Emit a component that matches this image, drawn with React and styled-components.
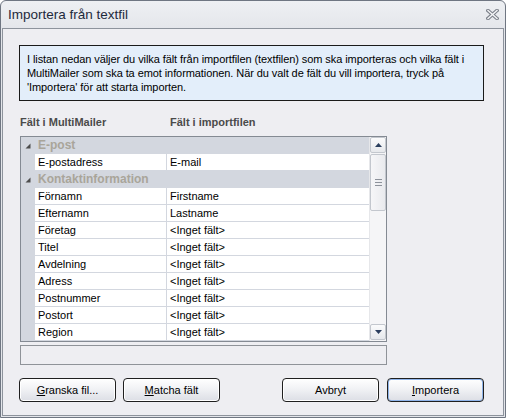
import React from 'react';
import styled, { createGlobalStyle } from 'styled-components';

const GlobalStyle = createGlobalStyle`
  html, body {
    margin: 0;
    padding: 0;
    background: #ffffff;
  }
  * {
    box-sizing: border-box;
  }
`;

const Window = styled.div`
  width: 506px;
  height: 418px;
  display: flex;
  flex-direction: column;
  border: 1px solid #6f7682;
  border-radius: 6px 6px 0 0;
  background: linear-gradient(#eef0f3, #e3e5ea 30px, #e3e5ea);
  font-family: Tahoma, "DejaVu Sans", "Liberation Sans", sans-serif;
  overflow: hidden;
`;

const TitleBar = styled.div`
  height: 27px;
  display: flex;
  align-items: center;
  justify-content: space-between;
  padding: 0 6px 0 7px;
  color: #1d2a3c;
  font-family: "Liberation Sans", Arial, sans-serif;
  font-size: 13.5px;
`;

const Client = styled.div`
  flex: 1;
  margin: 0 1px 1px;
  border: 1px solid #8d939c;
  background: #eeeef2;
  padding: 16px 16px 0 16px;
  display: flex;
  flex-direction: column;
  font-family: "Liberation Sans", Arial, sans-serif;
  font-size: 11px;
  color: #000;
`;

const InfoBox = styled.div`
  width: 465px;
  height: 56px;
  border: 1px solid #1a1a1a;
  background: #e3eefa;
  padding: 6px 7px;
  line-height: 14px;
  white-space: nowrap;
  letter-spacing: -0.08px;
`;

const HeaderRow = styled.div`
  display: flex;
  margin: 14px 0 7px 1px;
  height: 14px;
  line-height: 14px;
  font-weight: bold;
  color: #4b4b4b;
`;

const HeaderCell = styled.div`
  width: ${p => p.w}px;
`;

const Grid = styled.div`
  width: 367px;
  height: 206px;
  margin-left: 1px;
  border: 1px solid #848a93;
  display: flex;
  background: #f3f3f5;
`;

const Rows = styled.div`
  flex: 1;
  display: flex;
  flex-direction: column;
  background: #d3d7df;
`;

const Row = styled.div`
  height: 17px;
  display: flex;
  align-items: stretch;
  line-height: 16px;
`;

const Gutter = styled.div`
  width: 14px;
  display: flex;
  align-items: center;
  justify-content: center;
  padding-top: 1px;
`;

const GroupLabel = styled.div`
  flex: 1;
  padding-left: 3px;
  font-weight: bold;
  font-size: 12px;
  color: #a9a59a;
  line-height: 17px;
`;

const Cell = styled.div`
  width: ${p => p.w ? `${p.w}px` : 'auto'};
  flex: ${p => p.w ? 'none' : 1};
  background: #ffffff;
  border-bottom: 1px solid #d3d7df;
  border-right: ${p => p.divider ? '1px solid #d3d7df' : 'none'};
  padding-left: 3px;
  white-space: nowrap;
  overflow: hidden;
`;

const ScrollBar = styled.div`
  width: 17px;
  display: flex;
  flex-direction: column;
  background: #f5f5f7;
  border-left: 1px solid #e6e7ea;
`;

const ScrollButton = styled.div`
  height: 16px;
  margin: ${p => p.down ? 'auto 0 1px' : '0'};
  border: 1px solid #c3c7ce;
  border-radius: 2px;
  background: linear-gradient(#fbfbfc, #e6e8ec);
  display: flex;
  align-items: center;
  justify-content: center;
`;

const Thumb = styled.div`
  height: 57px;
  margin-top: 1px;
  border: 1px solid #c3c7ce;
  border-radius: 2px;
  background: linear-gradient(90deg, #f6f6f8, #e9eaee);
  display: flex;
  flex-direction: column;
  align-items: center;
  justify-content: center;
  gap: 2px;
`;

const Grip = styled.span`
  width: 7px;
  height: 1px;
  background: #8d929b;
`;

const StatusBox = styled.div`
  width: 367px;
  height: 20px;
  margin: 3px 0 0 1px;
  border: 1px solid #8f9399;
`;

const ButtonRow = styled.div`
  display: flex;
  margin-top: 13px;
  width: 465px;
`;

const Spacer = styled.div`
  flex: 1;
`;

const Button = styled.button`
  width: 97px;
  height: 24px;
  margin-left: ${p => p.gap || 0}px;
  border: 1px solid #1f1f1f;
  border-radius: 4px;
  background: linear-gradient(#ffffff, #f1f2f5 45%, #dcdee5);
  box-shadow: ${p => p.primary ? 'inset 0 0 0 1px #8fb4ea' : 'inset 0 0 0 1px #ffffff'};
  font-family: "Liberation Sans", Arial, sans-serif;
  font-size: 11px;
  color: #000;
  padding: 0;

  & u {
    text-decoration: underline;
  }
`;

const CloseIcon = () => (
  <svg width="13" height="11" viewBox="0 0 13 11">
    <path d="M2 1.5 L11 9.5 M11 1.5 L2 9.5" stroke="#7e838c" strokeWidth="3.6" strokeLinecap="square" />
    <path d="M2 1.5 L11 9.5 M11 1.5 L2 9.5" stroke="#f4f5f7" strokeWidth="1.4" strokeLinecap="square" />
  </svg>
);

const Expander = () => (
  <svg width="6" height="6" viewBox="0 0 6 6">
    <polygon points="5.5,0.5 5.5,5.5 0.5,5.5" fill="#4d4d4d" />
  </svg>
);

const Arrow = ({ down }) => (
  <svg width="7" height="4" viewBox="0 0 7 4">
    <polygon points={down ? '0,0 7,0 3.5,4' : '3.5,0 7,4 0,4'} fill="#2b3e5e" />
  </svg>
);

const rows = [
  { group: 'E-post' },
  { name: 'E-postadress', value: 'E-mail' },
  { group: 'Kontaktinformation' },
  { name: 'Förnamn', value: 'Firstname' },
  { name: 'Efternamn', value: 'Lastname' },
  { name: 'Företag', value: '<Inget fält>' },
  { name: 'Titel', value: '<Inget fält>' },
  { name: 'Avdelning', value: '<Inget fält>' },
  { name: 'Adress', value: '<Inget fält>' },
  { name: 'Postnummer', value: '<Inget fält>' },
  { name: 'Postort', value: '<Inget fält>' },
  { name: 'Region', value: '<Inget fält>' },
];

const App = () => (
  <>
    <GlobalStyle />
    <Window>
      <TitleBar>
        <span>Importera från textfil</span>
        <CloseIcon />
      </TitleBar>
      <Client>
        <InfoBox>
          I listan nedan väljer du vilka fält från importfilen (textfilen) som ska importeras och vilka fält i<br />
          MultiMailer som ska ta emot informationen. När du valt de fält du vill importera, tryck på<br />
          'Importera' för att starta importen.
        </InfoBox>
        <HeaderRow>
          <HeaderCell w={150}>Fält i MultiMailer</HeaderCell>
          <HeaderCell>Fält i importfilen</HeaderCell>
        </HeaderRow>
        <Grid>
          <Rows>
            {rows.map((r, i) =>
              r.group ?
                <Row key={i}>
                  <Gutter><Expander /></Gutter>
                  <GroupLabel>{r.group}</GroupLabel>
                </Row>
                :
                <Row key={i}>
                  <Gutter />
                  <Cell w={132} divider>{r.name}</Cell>
                  <Cell>{r.value}</Cell>
                </Row>
            )}
          </Rows>
          <ScrollBar>
            <ScrollButton><Arrow /></ScrollButton>
            <Thumb>
              <Grip />
              <Grip />
              <Grip />
            </Thumb>
            <ScrollButton down><Arrow down /></ScrollButton>
          </ScrollBar>
        </Grid>
        <StatusBox />
        <ButtonRow>
          <Button><u>G</u>ranska fil...</Button>
          <Button gap={7}><u>M</u>atcha fält</Button>
          <Spacer />
          <Button>Avbryt</Button>
          <Button gap={8} primary><u>I</u>mportera</Button>
        </ButtonRow>
      </Client>
    </Window>
  </>
);

export default App;
